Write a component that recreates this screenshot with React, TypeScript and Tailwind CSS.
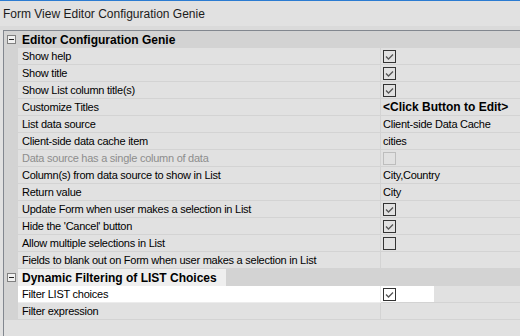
type Row =
  | { kind: "header"; label: string; highlight?: boolean }
  | {
      kind: "prop";
      label: string;
      value?: string;
      check?: "on" | "off" | "disabled";
      bold?: boolean;
      disabled?: boolean;
      highlight?: boolean;
    };

const rows: Row[] = [
  { kind: "header", label: "Editor Configuration Genie" },
  { kind: "prop", label: "Show help", check: "on" },
  { kind: "prop", label: "Show title", check: "on" },
  { kind: "prop", label: "Show List column title(s)", check: "on" },
  { kind: "prop", label: "Customize Titles", value: "<Click Button to Edit>", bold: true },
  { kind: "prop", label: "List data source", value: "Client-side Data Cache" },
  { kind: "prop", label: "Client-side data cache item", value: "cities" },
  { kind: "prop", label: "Data source has a single column of data", check: "disabled", disabled: true },
  { kind: "prop", label: "Column(s) from data source to show in List", value: "City,Country" },
  { kind: "prop", label: "Return value", value: "City" },
  { kind: "prop", label: "Update Form when user makes a selection in List", check: "on" },
  { kind: "prop", label: "Hide the 'Cancel' button", check: "on" },
  { kind: "prop", label: "Allow multiple selections in List", check: "off" },
  { kind: "prop", label: "Fields to blank out on Form when user makes a selection in List" },
  { kind: "header", label: "Dynamic Filtering of LIST Choices", highlight: true },
  { kind: "prop", label: "Filter LIST choices", check: "on", highlight: true },
  { kind: "prop", label: "Filter expression" },
];

function CheckBox({ state }: { state: "on" | "off" | "disabled" }) {
  const border = state === "disabled" ? "#bdbdbd" : "#333333";
  return (
    <svg width="13" height="13" viewBox="0 0 13 13">
      <rect x="0.5" y="0.5" width="12" height="12" fill="none" stroke={border} />
      {state === "on" && (
        <path d="M3 6.5 L5.5 9 L10 4.5" fill="none" stroke="#555555" strokeWidth="1.3" />
      )}
    </svg>
  );
}

function Minus() {
  return (
    <svg width="9" height="9" viewBox="0 0 9 9">
      <rect x="0.5" y="0.5" width="8" height="8" fill="#f0f0f0" stroke="#808080" />
      <path d="M2 4.5 H7" stroke="#222222" />
    </svg>
  );
}

export default function App() {
  return (
    <div className="w-[520px] h-[336px] overflow-hidden bg-[#e1e1e1] font-['Liberation_Sans',Arial,sans-serif] text-black">
      <div className="h-px bg-[#2b7bd1]" />
      <div className="h-[25px] flex items-center pl-[3px] text-[12px] text-[#1b1b1b]">
        Form View Editor Configuration Genie
      </div>
      <div className="h-[4px] bg-[#dadada]" />
      <div className="ml-[3px] h-[306px] border-l border-t border-[#82878f]">
        {rows.map((r, i) =>
          r.kind === "header" ? (
            <div key={i} className="flex h-[17px] bg-[#d3d3d3] text-[12px] font-bold">
              <div className="w-[14px] flex items-center justify-center">
                <Minus />
              </div>
              <div
                className={
                  r.highlight
                    ? "w-[208px] flex items-center pl-[4px] bg-[#efefef]"
                    : "flex items-center pl-[4px]"
                }
              >
                {r.label}
              </div>
            </div>
          ) : (
            <div key={i} className="flex h-[17px] text-[11px] tracking-[-0.25px]">
              <div className="w-[14px] bg-[#d3d3d3]" />
              <div
                className={
                  "w-[363px] flex items-center pl-[4px] border-b border-r whitespace-nowrap overflow-hidden " +
                  (r.highlight ? "bg-white border-[#ececec]" : "border-[#d3d3d3]") +
                  (r.disabled ? " text-[#8d8d8d]" : "")
                }
              >
                {r.label}
              </div>
              <div
                className={
                  "flex-1 flex items-center pl-[2px] border-b " +
                  (r.highlight
                    ? "bg-[linear-gradient(to_right,#ffffff_53px,transparent_53px)] border-[#d3d3d3]"
                    : "border-[#d3d3d3]") +
                  (r.bold ? " font-bold text-[12px] tracking-normal" : "")
                }
              >
                {r.check ? <CheckBox state={r.check} /> : r.value}
              </div>
            </div>
          )
        )}
      </div>
    </div>
  );
}
